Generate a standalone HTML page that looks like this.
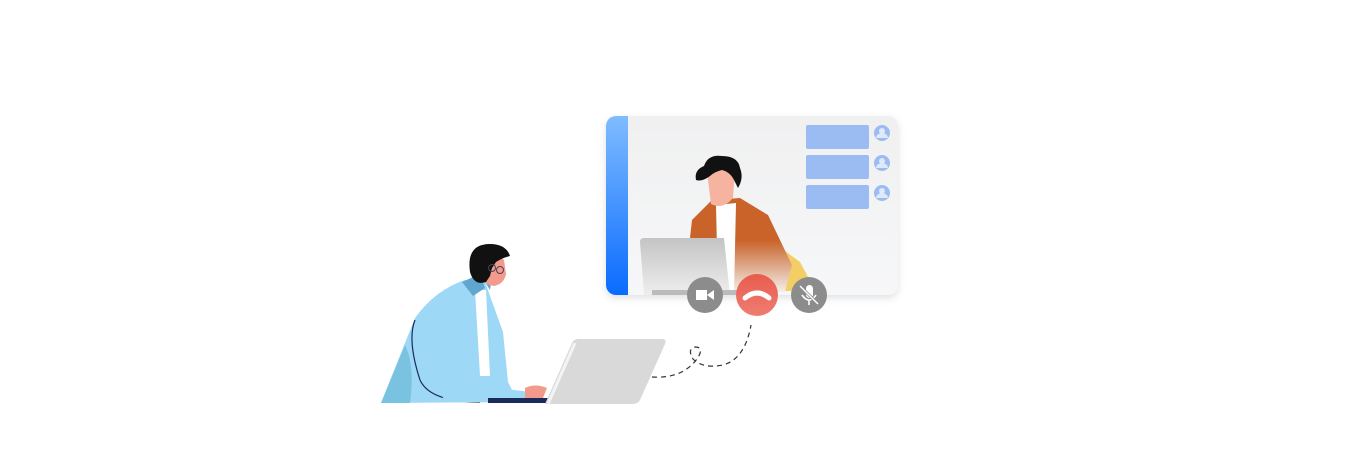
<!DOCTYPE html>
<html><head><style>html,body{margin:0;padding:0;background:#fff;width:1368px;height:458px;overflow:hidden}</style></head>
<body>
<svg width="1368" height="458" viewBox="0 0 1368 458" xmlns="http://www.w3.org/2000/svg">
<defs>
<linearGradient id="bb" x1="0" y1="0" x2="0" y2="1"><stop offset="0" stop-color="#7fbcff"/><stop offset="1" stop-color="#0a6bff"/></linearGradient>
<linearGradient id="jk" x1="0" y1="0" x2="0" y2="1"><stop offset="0.45" stop-color="#c9632a"/><stop offset="1" stop-color="#f3efea"/></linearGradient>
<linearGradient id="lp" x1="0" y1="0" x2="0" y2="1"><stop offset="0" stop-color="#c4c4c4"/><stop offset="1" stop-color="#eeeeee"/></linearGradient>
<linearGradient id="rd" x1="0" y1="0" x2="0" y2="1"><stop offset="0" stop-color="#e85c4e"/><stop offset="1" stop-color="#ef7d72"/></linearGradient>
<linearGradient id="cb" x1="0" y1="0" x2="0" y2="1"><stop offset="0" stop-color="#f0f0f1"/><stop offset="1" stop-color="#f6f7f8"/></linearGradient>
<filter id="sh" x="-10%" y="-10%" width="120%" height="130%"><feDropShadow dx="0" dy="3" stdDeviation="4" flood-color="#000" flood-opacity="0.12"/></filter>
</defs>
<rect x="606" y="116" width="292" height="179" rx="10" fill="url(#cb)" filter="url(#sh)"/>
<path d="M616 116h12v179h-12a10 10 0 0 1-10-10v-159a10 10 0 0 1 10-10z" fill="url(#bb)"/>
<rect x="806" y="125" width="63" height="24" rx="2" fill="#9bbcf2"/>
<rect x="806" y="155" width="63" height="24" rx="2" fill="#9bbcf2"/>
<rect x="806" y="185" width="63" height="24" rx="2" fill="#9bbcf2"/>
<g fill="#9bbcf2"><circle cx="882" cy="133" r="8"/><circle cx="882" cy="163" r="8"/><circle cx="882" cy="193" r="8"/></g>
<g fill="#dfe9fb"><circle cx="882" cy="131" r="3"/><circle cx="882" cy="161" r="3"/><circle cx="882" cy="191" r="3"/>
<path d="M876 138a6 5 0 0 1 12 0z"/><path d="M876 168a6 5 0 0 1 12 0z"/><path d="M876 198a6 5 0 0 1 12 0z"/></g>
<path d="M770 240 L800 262 L815 290 L760 292z" fill="#f2c74a" opacity="0.85"/>
<path d="M684 292 L692 220 L712 200 L740 198 L768 215 L792 265 L785 292z" fill="url(#jk)"/>
<path d="M716 205 L736 203 L734 292 L718 292z" fill="#fff"/>
<path d="M707 172 q2 -6 10 -6 l18 4 l-2 28 q-10 12 -22 6 z" fill="#f6b3a0"/>
<path d="M696 180 q-2 -10 8 -14 q4 -12 18 -10 q16 0 18 12 q4 10 -2 20 l-4 -8 q-4 -8 -12 -10 q-8 2 -12 6 q-8 6 -14 4z" fill="#111"/>
<path d="M640 242 q0 -4 4 -4 h80 l6 57 h-86z" fill="url(#lp)"/>
<rect x="652" y="290" width="90" height="5" fill="#bbb"/>
<circle cx="705" cy="295" r="18" fill="#8c8c8c"/>
<rect x="696" y="290" width="11" height="10" fill="#fff"/><path d="M707 295 l7 -5 v10z" fill="#fff"/>
<circle cx="757" cy="295" r="21" fill="url(#rd)"/>
<path d="M745 298 q12 -10 24 0" stroke="#fff" stroke-width="5" fill="none" stroke-linecap="round"/>
<circle cx="809" cy="295" r="18" fill="#8c8c8c"/>
<rect x="806" y="285" width="7" height="13" rx="3.5" fill="#fff"/>
<path d="M802 295 q7 10 14 0 M809 300 v5" stroke="#fff" stroke-width="1.6" fill="none"/>
<path d="M800 286 l18 18" stroke="#8c8c8c" stroke-width="3"/><path d="M800 286 l18 18" stroke="#fff" stroke-width="1.4"/>
<path d="M652 377 q30 2 45 -18 q8 -12 -2 -12 q-8 2 -2 12 q10 10 30 6 q22 -6 28 -40" stroke="#333" stroke-width="1.2" stroke-dasharray="5 4" fill="none"/>
<path d="M381 403 L415 318 q20 -28 50 -38 l20 2 l18 50 l5 50 l10 20 z" fill="#9ed8f7"/>
<path d="M381 403 L405 345 q10 20 5 58z" fill="#79c3e0"/>
<path d="M415 320 q-8 20 5 60 q10 22 60 22" stroke="#1c2a5a" stroke-width="1.2" fill="none"/>
<path d="M475 290 l5 86 h10 l-4 -86z" fill="#fff"/>
<path d="M462 282 l18 -8 l5 14 l-12 8z M480 274 l12 2 l-2 14z" fill="#5fa7cf"/>
<path d="M482 262 q2 -10 14 -8 l8 6 l2 14 q-2 10 -12 12 l-8 -2z" fill="#f29a8c"/>
<path d="M470 272 q-4 -28 20 -28 q16 0 20 12 q-8 2 -14 6 l-4 6 l-2 8 l-4 6 q-12 4 -16 -10z" fill="#111"/>
<circle cx="492" cy="268" r="3.5" fill="none" stroke="#445" stroke-width="1"/><circle cx="500" cy="270" r="3.5" fill="none" stroke="#445" stroke-width="1"/>
<path d="M435 380 l95 12 l0 10 l-85 0z" fill="#9ed8f7"/>
<path d="M525 388 q10 -5 22 0 l-4 10 h-18z" fill="#f29a8c"/>
<rect x="488" y="398" width="60" height="5" fill="#1c2a5a"/>
<path d="M545 404 L572 343 q2 -4 6 -4 h84 q5 0 3 5 L640 400 q-2 4 -8 4z" fill="#d9d9d9"/>
<path d="M548 404 L575 343" stroke="#f4f4f4" stroke-width="3"/>
</svg>
</body></html>
